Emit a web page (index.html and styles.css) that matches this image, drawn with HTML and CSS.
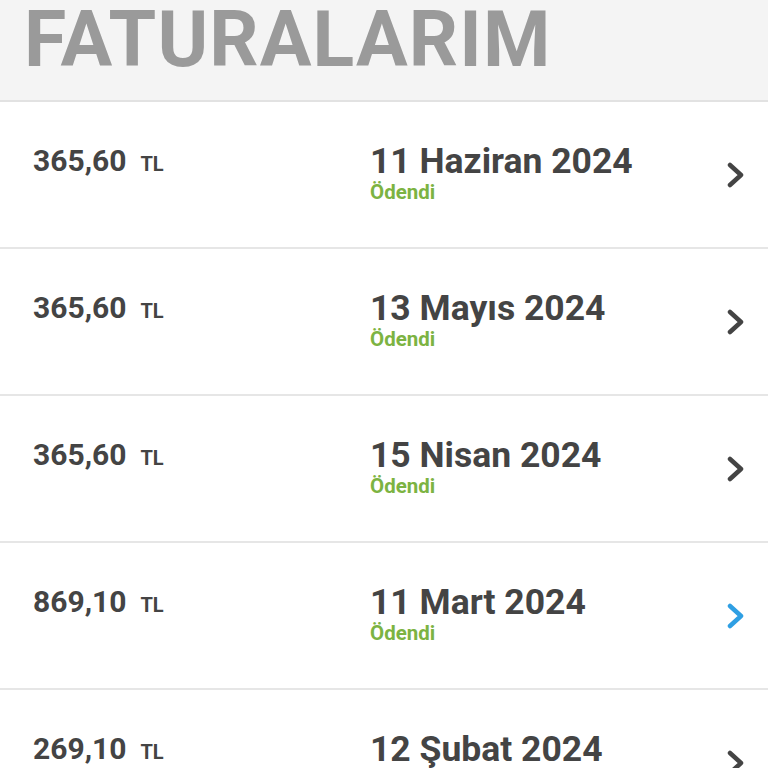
FILE: index.html
```html
<!DOCTYPE html>
<html lang="tr">
<head>
<meta charset="utf-8">
<link rel="stylesheet" href="styles.css">
</head>
<body>
<header class="header"><h1 class="title">FATURALARIM</h1></header>
<ul class="list">
  <li class="row">
    <div class="amount">365,60<span class="cur">TL</span></div>
    <div class="info"><div class="date">11 Haziran 2024</div><div class="status">Ödendi</div></div>
    <svg class="chev" viewBox="0 0 20 26"><path d="M4 3 L15 13 L4 23" fill="none" stroke="#444" stroke-width="4.5" stroke-linecap="round" stroke-linejoin="round"/></svg>
  </li>
  <li class="row">
    <div class="amount">365,60<span class="cur">TL</span></div>
    <div class="info"><div class="date">13 Mayıs 2024</div><div class="status">Ödendi</div></div>
    <svg class="chev" viewBox="0 0 20 26"><path d="M4 3 L15 13 L4 23" fill="none" stroke="#444" stroke-width="4.5" stroke-linecap="round" stroke-linejoin="round"/></svg>
  </li>
  <li class="row">
    <div class="amount">365,60<span class="cur">TL</span></div>
    <div class="info"><div class="date">15 Nisan 2024</div><div class="status">Ödendi</div></div>
    <svg class="chev" viewBox="0 0 20 26"><path d="M4 3 L15 13 L4 23" fill="none" stroke="#444" stroke-width="4.5" stroke-linecap="round" stroke-linejoin="round"/></svg>
  </li>
  <li class="row">
    <div class="amount">869,10<span class="cur">TL</span></div>
    <div class="info"><div class="date">11 Mart 2024</div><div class="status">Ödendi</div></div>
    <svg class="chev" viewBox="0 0 20 26"><path d="M4 3 L15 13 L4 23" fill="none" stroke="#2f9fe3" stroke-width="4.5" stroke-linecap="round" stroke-linejoin="round"/></svg>
  </li>
  <li class="row">
    <div class="amount">269,10<span class="cur">TL</span></div>
    <div class="info"><div class="date">12 Şubat 2024</div><div class="status">Ödendi</div></div>
    <svg class="chev" viewBox="0 0 20 26"><path d="M4 3 L15 13 L4 23" fill="none" stroke="#444" stroke-width="4.5" stroke-linecap="round" stroke-linejoin="round"/></svg>
  </li>
</ul>
</body>
</html>
```
FILE: styles.css
```css
* { box-sizing: border-box; }
html, body { margin: 0; padding: 0; background: #fff; overflow: hidden; }
body { font-family: "Roboto", "DejaVu Sans", sans-serif; color: #444; }
.header {
  height: 102px;
  background: #f4f4f4;
  border-bottom: 2px solid #e2e2e2;
  padding-left: 24px;
  overflow: hidden;
}
.title {
  margin: 0;
  font-size: 77px;
  font-weight: 700;
  color: #9a9a9a;
  line-height: 80px;
  letter-spacing: 1.1px;
}
.list { list-style: none; margin: 0; padding: 0; }
.row {
  height: 147px;
  border-bottom: 2px solid #e6e6e6;
  display: flex;
  align-items: flex-start;
  padding: 39px 0 0 33px;
}
.amount {
  width: 337px;
  font-size: 30px;
  font-weight: 700;
  color: #444;
  line-height: 40px;
}
.cur { font-size: 20px; margin-left: 14px; }
.info { flex: 1; }
.date { font-size: 35.5px; font-weight: 700; color: #444; line-height: 40px; }
.status { font-size: 20.5px; font-weight: 700; color: #7cb342; line-height: 22px; }
.chev { width: 20px; height: 26px; margin: 21px 22px 0 0; }
```
